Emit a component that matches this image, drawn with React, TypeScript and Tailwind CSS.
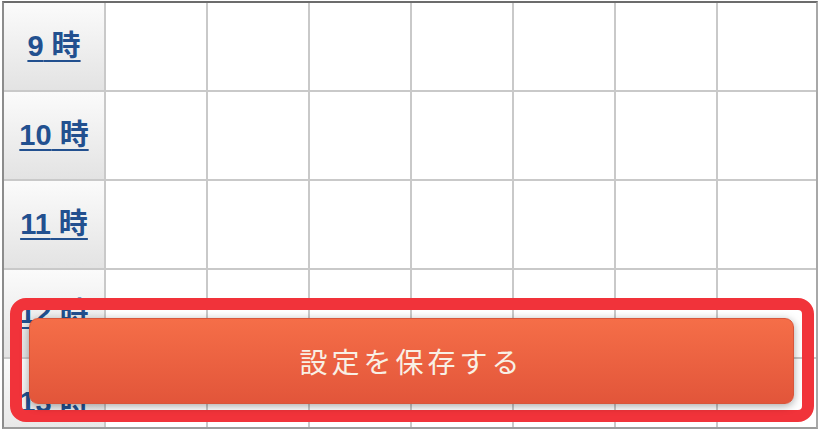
const hours = [9, 10, 11, 12, 13]
const cols = [0, 1, 2, 3, 4, 5, 6]

export default function App() {
  return (
    <div className="relative w-[820px] h-[432px] bg-white overflow-hidden">
      <div className="mt-px ml-[2px] w-[816px] h-[428px] overflow-hidden border-t-2 border-l-2 border-r-2 border-b-2 border-t-[#6c6c6c] border-l-[#8c8c8c] border-r-[#a8a8a8] border-b-[#9c9c9c]">
        {hours.map((h) => (
          <div key={h} className="flex h-[89px] shrink-0 border-b-2 border-[#c9c9c9]">
            <div className="w-[102px] shrink-0 border-r-2 border-[#c9c9c9] bg-gradient-to-b from-[#fbfbfb] to-[#e3e3e3] flex items-center justify-center">
              <a
                href="#"
                className="text-[29px] leading-none font-bold text-[#22508f] underline decoration-2 underline-offset-[4px]"
                style={{ fontFamily: '"Liberation Sans", "Noto Sans CJK JP", sans-serif' }}
              >
                {h} 時
              </a>
            </div>
            {cols.map((c) => (
              <div
                key={c}
                className={
                  c < 6
                    ? "w-[102px] shrink-0 border-r-2 border-[#c9c9c9] bg-white"
                    : "flex-1 bg-white"
                }
              />
            ))}
          </div>
        ))}
      </div>

      {/* highlight around the save button */}
      <div className="absolute left-[10px] top-[298px] w-[804px] h-[124px] rounded-[16px] border-[12px] border-[#f1333a]" />

      <button
        className="absolute left-[29px] top-[318px] w-[765px] h-[86px] rounded-[9px] border border-[#d8553a] bg-gradient-to-b from-[#f56e48] to-[#e2553a] shadow-[0_2px_8px_rgba(0,0,0,0.35)] flex items-center justify-center text-[28px] tracking-[4px] text-[#f8f0e5]"
        style={{ fontFamily: '"Noto Sans CJK JP", sans-serif' }}
      >
        設定を保存する
      </button>
    </div>
  )
}
